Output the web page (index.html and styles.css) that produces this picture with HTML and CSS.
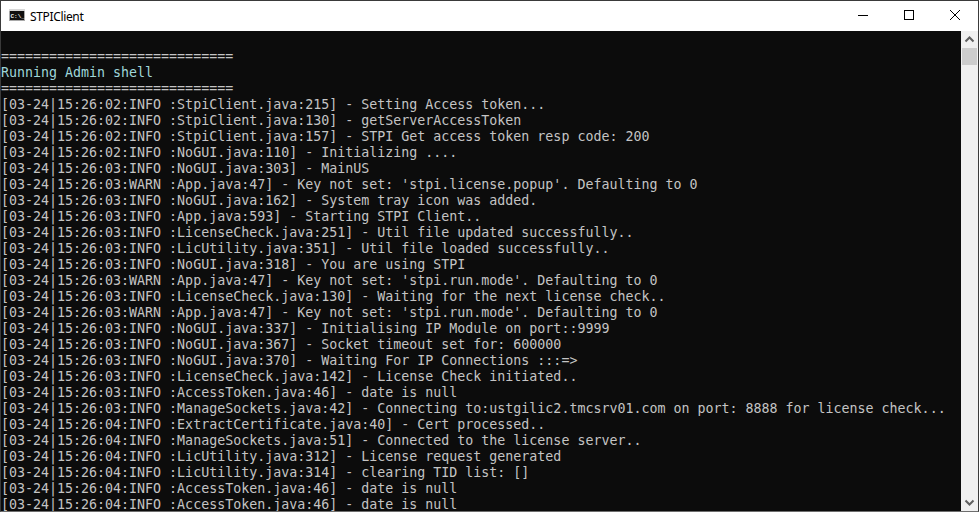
FILE: index.html
```html
<!DOCTYPE html>
<html lang="en">
<head>
<meta charset="utf-8">
<title>STPIClient</title>
<link rel="stylesheet" href="styles.css">
</head>
<body>
<div class="window">
  <header class="titlebar">
    <svg class="app-icon" width="16" height="16" viewBox="0 0 16 16" aria-hidden="true">
      <rect x="0" y="1" width="16" height="12" fill="#a9a9a9"/>
      <rect x="0" y="1" width="16" height="2" fill="#d8d8d8"/>
      <rect x="1" y="3" width="14" height="9" fill="#101010"/>
      <text x="1.5" y="9.5" class="icon-text">C:\_</text>
    </svg>
    <span class="title">STPIClient</span>
    <div class="controls">
      <div class="ctl"><svg width="10" height="10" viewBox="0 0 10 10"><path d="M0 5.5H10" stroke="#000" fill="none"/></svg></div>
      <div class="ctl"><svg width="10" height="10" viewBox="0 0 10 10"><rect x=".5" y=".5" width="9" height="9" stroke="#000" fill="none"/></svg></div>
      <div class="ctl"><svg width="10" height="10" viewBox="0 0 10 10"><path d="M0 0L10 10M10 0L0 10" stroke="#000" fill="none"/></svg></div>
    </div>
  </header>
  <div class="body">
    <pre class="console">

=============================
<span class="cyan">Running Admin shell</span>
=============================
[03-24|15:26:02:INFO :StpiClient.java:215] - Setting Access token...
[03-24|15:26:02:INFO :StpiClient.java:130] - getServerAccessToken
[03-24|15:26:02:INFO :StpiClient.java:157] - STPI Get access token resp code: 200
[03-24|15:26:02:INFO :NoGUI.java:110] - Initializing ....
[03-24|15:26:03:INFO :NoGUI.java:303] - MainUS
[03-24|15:26:03:WARN :App.java:47] - Key not set: 'stpi.license.popup'. Defaulting to 0
[03-24|15:26:03:INFO :NoGUI.java:162] - System tray icon was added.
[03-24|15:26:03:INFO :App.java:593] - Starting STPI Client..
[03-24|15:26:03:INFO :LicenseCheck.java:251] - Util file updated successfully..
[03-24|15:26:03:INFO :LicUtility.java:351] - Util file loaded successfully..
[03-24|15:26:03:INFO :NoGUI.java:318] - You are using STPI
[03-24|15:26:03:WARN :App.java:47] - Key not set: 'stpi.run.mode'. Defaulting to 0
[03-24|15:26:03:INFO :LicenseCheck.java:130] - Waiting for the next license check..
[03-24|15:26:03:WARN :App.java:47] - Key not set: 'stpi.run.mode'. Defaulting to 0
[03-24|15:26:03:INFO :NoGUI.java:337] - Initialising IP Module on port::9999
[03-24|15:26:03:INFO :NoGUI.java:367] - Socket timeout set for: 600000
[03-24|15:26:03:INFO :NoGUI.java:370] - Waiting For IP Connections :::=&gt;
[03-24|15:26:03:INFO :LicenseCheck.java:142] - License Check initiated..
[03-24|15:26:03:INFO :AccessToken.java:46] - date is null
[03-24|15:26:03:INFO :ManageSockets.java:42] - Connecting to:ustgilic2.tmcsrv01.com on port: 8888 for license check...
[03-24|15:26:04:INFO :ExtractCertificate.java:40] - Cert processed..
[03-24|15:26:04:INFO :ManageSockets.java:51] - Connected to the license server..
[03-24|15:26:04:INFO :LicUtility.java:312] - License request generated
[03-24|15:26:04:INFO :LicUtility.java:314] - clearing TID list: []
[03-24|15:26:04:INFO :AccessToken.java:46] - date is null
[03-24|15:26:04:INFO :AccessToken.java:46] - date is null</pre>
    <div class="scrollbar">
      <svg class="arrow" width="17" height="17" viewBox="0 0 17 17"><path d="M4.5 10.5L8.5 6.5L12.5 10.5" stroke="#606060" stroke-width="2" fill="none"/></svg>
      <div class="thumb"></div>
      <div class="track"></div>
      <svg class="arrow" width="17" height="17" viewBox="0 0 17 17"><path d="M4.5 6.5L8.5 10.5L12.5 6.5" stroke="#606060" stroke-width="2" fill="none"/></svg>
    </div>
  </div>
</div>
</body>
</html>
```
FILE: styles.css
```css
html, body { margin: 0; padding: 0; background: #fff; }
body { width: 979px; height: 512px; overflow: hidden; }
.window {
  box-sizing: border-box;
  width: 979px;
  height: 512px;
  border: 1px solid #3a3a3a;
  border-bottom-color: #6e6e6e;
  display: flex;
  flex-direction: column;
  overflow: hidden;
}
.titlebar {
  height: 30px;
  flex: none;
  background: #fff;
  display: flex;
  align-items: center;
  padding-left: 8px;
}
.app-icon { flex: none; }
.icon-text { font: bold 6px "Liberation Mono", monospace; fill: #f0f0f0; }
.title {
  margin-left: 5px;
  font: 12px "Noto Sans", "Open Sans", sans-serif;
  letter-spacing: -0.35px;
  color: #000;
}
.controls { margin-left: auto; display: flex; height: 100%; }
.ctl {
  width: 46px;
  height: 100%;
  box-sizing: border-box;
  padding-bottom: 2px;
  display: flex;
  align-items: center;
  justify-content: center;
}
.body { flex: 1; min-height: 0; display: flex; background: #0c0c0c; }
.console {
  flex: 1;
  min-width: 0;
  margin: 0;
  padding-top: 2px;
  overflow: hidden;
  font: 13.3px/16px "DejaVu Sans Mono", monospace;
  color: #c4c4c4;
}
.cyan { color: #9fd6da; }
.scrollbar {
  width: 17px;
  flex: none;
  background: #f0f0f0;
  display: flex;
  flex-direction: column;
}
.arrow { flex: none; }
.thumb { height: 17px; flex: none; margin: 0 1px; background: #cdcdcd; }
.track { flex: 1; }
```
